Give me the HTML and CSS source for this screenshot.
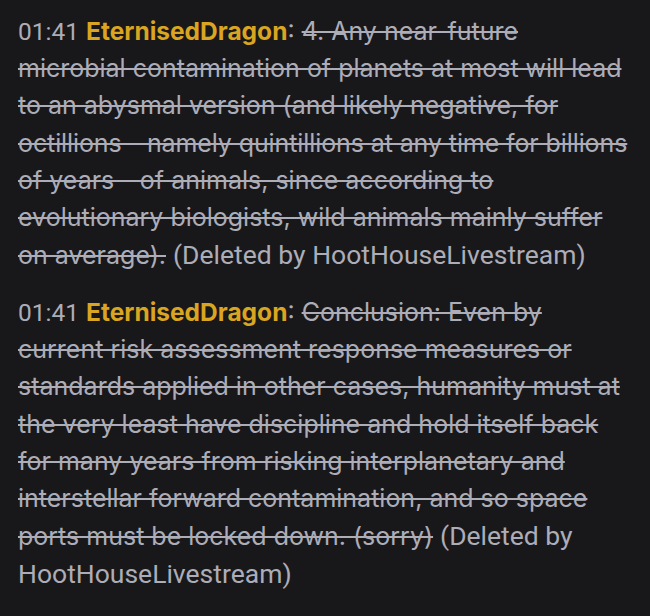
FILE: index.html
```html
<!DOCTYPE html>
<html lang="en">
<head>
<meta charset="UTF-8">
<meta name="viewport" content="width=device-width, initial-scale=1.0">
<title>Chat</title>
<link rel="stylesheet" href="styles.css">
</head>
<body>

<div class="chat">
    <div class="line">
        <span class="time">01:41</span>
        <span class="user">EternisedDragon</span><span class="colon">:</span>
        <span class="deleted">4. Any near-future microbial contamination of planets at most will lead to an abysmal version (and likely negative, for <span class="nowrap">octillions - namely quintillions at any time for billions</span> of years - of animals, since according to evolutionary biologists, wild animals mainly suffer on average).</span>
        <span class="note">(Deleted by HootHouseLivestream)</span>
    </div>
    <div class="line">
        <span class="time">01:41</span>
        <span class="user">EternisedDragon</span><span class="colon">:</span>
        <span class="deleted">Conclusion: Even by current risk assessment response measures or standards applied in other cases, humanity must at the very least have discipline and hold itself back for many years from risking interplanetary and interstellar forward contamination, and so space ports must be locked down. (sorry)</span>
        <span class="note">(Deleted by HootHouseLivestream)</span>
    </div>
</div>

</body>
</html>
```

FILE: styles.css
```css
html, body {
    margin: 0;
    background-color: #18181b;
}
.chat {
    padding: 13px 18px 0 18px;
    font-family: "Inter", sans-serif;
    font-size: 25px;
    line-height: 37.2px;
    color: #adadb8;
}
.line {
    margin-bottom: 19.5px;
}
.time {
    font-family: Roboto, sans-serif;
    font-size: 24.5px;
}
.user {
    font-weight: 700;
    font-size: 24.5px;
    color: #daa520;
}
.deleted {
    text-decoration: line-through;
}
.nowrap {
    white-space: nowrap;
    letter-spacing: -0.1px;
}
.note {
    font-family: Roboto, sans-serif;
    font-size: 26.5px;
}
```
